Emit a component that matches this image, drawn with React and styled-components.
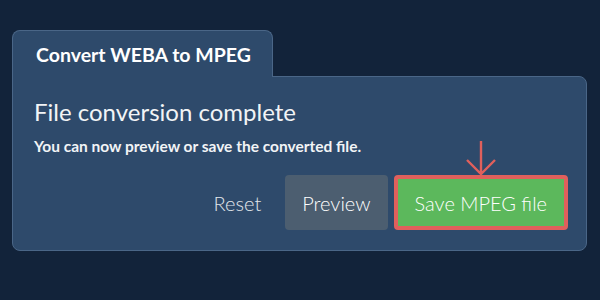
import React from "react";
import styled, { createGlobalStyle } from "styled-components";

const GlobalStyle = createGlobalStyle`
  html, body {
    margin: 0;
    padding: 0;
    background: #12233a;
    font-family: Lato, "Noto Sans", sans-serif;
  }
`;

const Page = styled.div`
  width: 600px;
  height: 300px;
  box-sizing: border-box;
  padding: 30px 13px 0 12px;
`;

const Tab = styled.div`
  display: inline-flex;
  align-items: center;
  box-sizing: border-box;
  height: 47px;
  width: 261px;
  padding: 0 0 0 23px;
  margin-bottom: -1px;
  position: relative;
  z-index: 1;
  background: #2e4a6b;
  border: 1px solid #4a6687;
  border-bottom: none;
  border-radius: 8px 8px 0 0;
  color: #ffffff;
  font-weight: 700;
  font-size: 19.5px;
`;

const Panel = styled.div`
  box-sizing: border-box;
  height: 175px;
  background: #2e4a6b;
  border: 1px solid #4a6687;
  border-radius: 0 8px 8px 8px;
  padding: 19px 18px 20px 21px;
  display: flex;
  flex-direction: column;
`;

const Heading = styled.h2`
  margin: 0;
  font-size: 24px;
  font-weight: 400;
  color: #f2f4f6;
  line-height: 32px;
`;

const Subtitle = styled.p`
  margin: 8px 0 0;
  font-size: 15.5px;
  font-weight: 700;
  color: #f2f4f6;
  line-height: 20px;
`;

const Actions = styled.div`
  margin-top: auto;
  display: flex;
  justify-content: flex-end;
  align-items: center;
  gap: 6px;
`;

const TextButton = styled.button`
  background: none;
  border: none;
  font-family: inherit;
  font-weight: 300;
  font-size: 20px;
  color: #e2e7ec;
  padding: 0 18px 0 0;
  height: 55px;
`;

const Button = styled.button`
  position: relative;
  box-sizing: border-box;
  height: 55px;
  padding: 0 17px;
  border-radius: 4px;
  font-family: inherit;
  font-weight: 300;
  font-size: 20px;
  color: #ffffff;
  background: ${(p) => (p.$primary ? "#5cb85c" : "#4c5e70")};
  border: ${(p) => (p.$primary ? "4px solid #e0605c" : "none")};
`;

const Arrow = styled.svg`
  position: absolute;
  left: 50%;
  bottom: 100%;
  margin-bottom: 3px;
  transform: translateX(-50%);
`;

export default function App() {
  return (
    <Page>
      <GlobalStyle />
      <Tab>Convert WEBA to MPEG</Tab>
      <Panel>
        <Heading>File conversion complete</Heading>
        <Subtitle>You can now preview or save the converted file.</Subtitle>
        <Actions>
          <TextButton>Reset</TextButton>
          <Button>Preview</Button>
          <Button $primary>
            <Arrow width="32" height="36" viewBox="0 0 32 36">
              <path
                d="M16 1 V34 M2 20 L16 34 L30 20"
                fill="none"
                stroke="#e0605c"
                strokeWidth="2.4"
              />
            </Arrow>
            Save MPEG file
          </Button>
        </Actions>
      </Panel>
    </Page>
  );
}
